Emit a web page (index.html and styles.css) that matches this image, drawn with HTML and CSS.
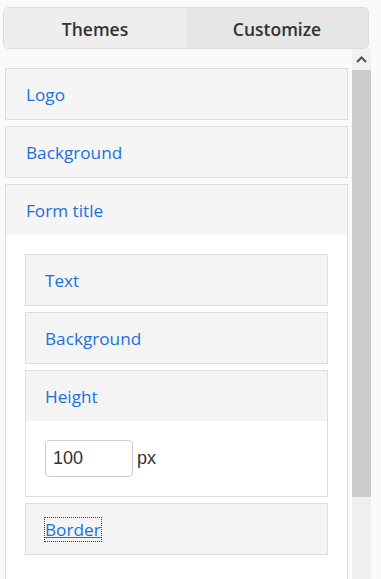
FILE: index.html
```html
<!DOCTYPE html>
<html>
<head>
<meta charset="utf-8">
<link rel="stylesheet" href="styles.css">
</head>
<body>
<div class="app">
  <div class="tabs">
    <div class="tab">Themes</div>
    <div class="tab active">Customize</div>
  </div>
  <div class="panel">
    <div class="content">
      <div class="item"><div class="head"><a class="link">Logo</a></div></div>
      <div class="item"><div class="head"><a class="link">Background</a></div></div>
      <div class="item open">
        <div class="head"><a class="link">Form title</a></div>
        <div class="body">
          <div class="item sub"><div class="head"><a class="link">Text</a></div></div>
          <div class="item sub"><div class="head"><a class="link">Background</a></div></div>
          <div class="item sub open">
            <div class="head"><a class="link">Height</a></div>
            <div class="body">
              <div class="field">
                <input class="num" type="text" value="100">
                <span class="unit">px</span>
              </div>
            </div>
          </div>
          <div class="item sub"><div class="head"><a class="link focus" href="#">Border</a></div></div>
        </div>
      </div>
    </div>
    <div class="scrollbar">
      <div class="arrow">
        <svg width="19" height="21" viewBox="0 0 19 21"><polyline points="5,13 9.5,8.5 14,13" fill="none" stroke="#505050" stroke-width="2"/></svg>
      </div>
      <div class="thumb"></div>
      <div class="track"></div>
    </div>
  </div>
</div>
</body>
</html>
```

FILE: styles.css
```css
* { box-sizing: border-box; }
html, body { margin: 0; padding: 0; }
body {
  background: #fafafa;
  font-family: "Open Sans", "Noto Sans", sans-serif;
  font-size: 17px;
  color: #333;
  overflow: hidden;
}
.app {
  height: 100vh;
  display: flex;
  flex-direction: column;
}
.tabs {
  margin: 7px 12px 0 3px;
  height: 42px;
  border: 1px solid #dddddd;
  border-radius: 5px;
  display: flex;
  overflow: hidden;
  flex-shrink: 0;
}
.tab {
  flex: 1;
  display: flex;
  align-items: center;
  justify-content: center;
  background: #eeeeee;
  font-weight: 600;
  font-size: 17.5px;
  color: #333;
  padding-top: 1px;
}
.tab.active { background: #e6e6e6; }
.panel {
  flex: 1;
  min-height: 0;
  display: flex;
  margin: 0 10px 0 3px;
}
.content {
  flex: 1;
  min-width: 0;
  overflow: hidden;
  padding: 19px 4px 0 2px;
  display: flex;
  flex-direction: column;
  gap: 6px;
}
.item {
  border: 1px solid #dddddd;
  background: #f5f5f5;
  flex-shrink: 0;
}
.item.sub { background: #f4f4f4; }
.head {
  height: 50px;
  line-height: 52px;
  padding-left: 20px;
  background: #f5f5f5;
  font-size: 17.2px;
}
.item.sub .head { background: #f4f4f4; padding-left: 19px; }
.link {
  color: #1c6fde;
  text-decoration: none;
}
.link.focus {
  text-decoration: underline;
  outline: 1px dotted #1b3f9a;
  outline-offset: 0;
}
.body {
  background: #ffffff;
  padding: 19px 19px 40px;
  display: flex;
  flex-direction: column;
  gap: 6px;
}
.item.sub .body { padding: 19px 19px 19px; }
.field {
  display: flex;
  align-items: center;
  gap: 4px;
}
.num {
  width: 88px;
  height: 37px;
  border: 1px solid #cccccc;
  border-radius: 4px;
  padding: 0 7px;
  font-family: "Liberation Sans", Arial, sans-serif;
  font-size: 18px;
  color: #333;
  background: #fff;
  margin: 0;
}
.unit {
  font-family: "Liberation Sans", Arial, sans-serif;
  font-size: 18px;
  color: #333;
}
.scrollbar {
  width: 19px;
  flex-shrink: 0;
  display: flex;
  flex-direction: column;
  background: #f0f0f0;
}
.arrow {
  height: 21px;
  background: #f1f1f1;
}
.arrow svg { display: block; }
.thumb {
  height: 427px;
  background: #cdcdcd;
}
.track { flex: 1; background: #f0f0f0; }
```
